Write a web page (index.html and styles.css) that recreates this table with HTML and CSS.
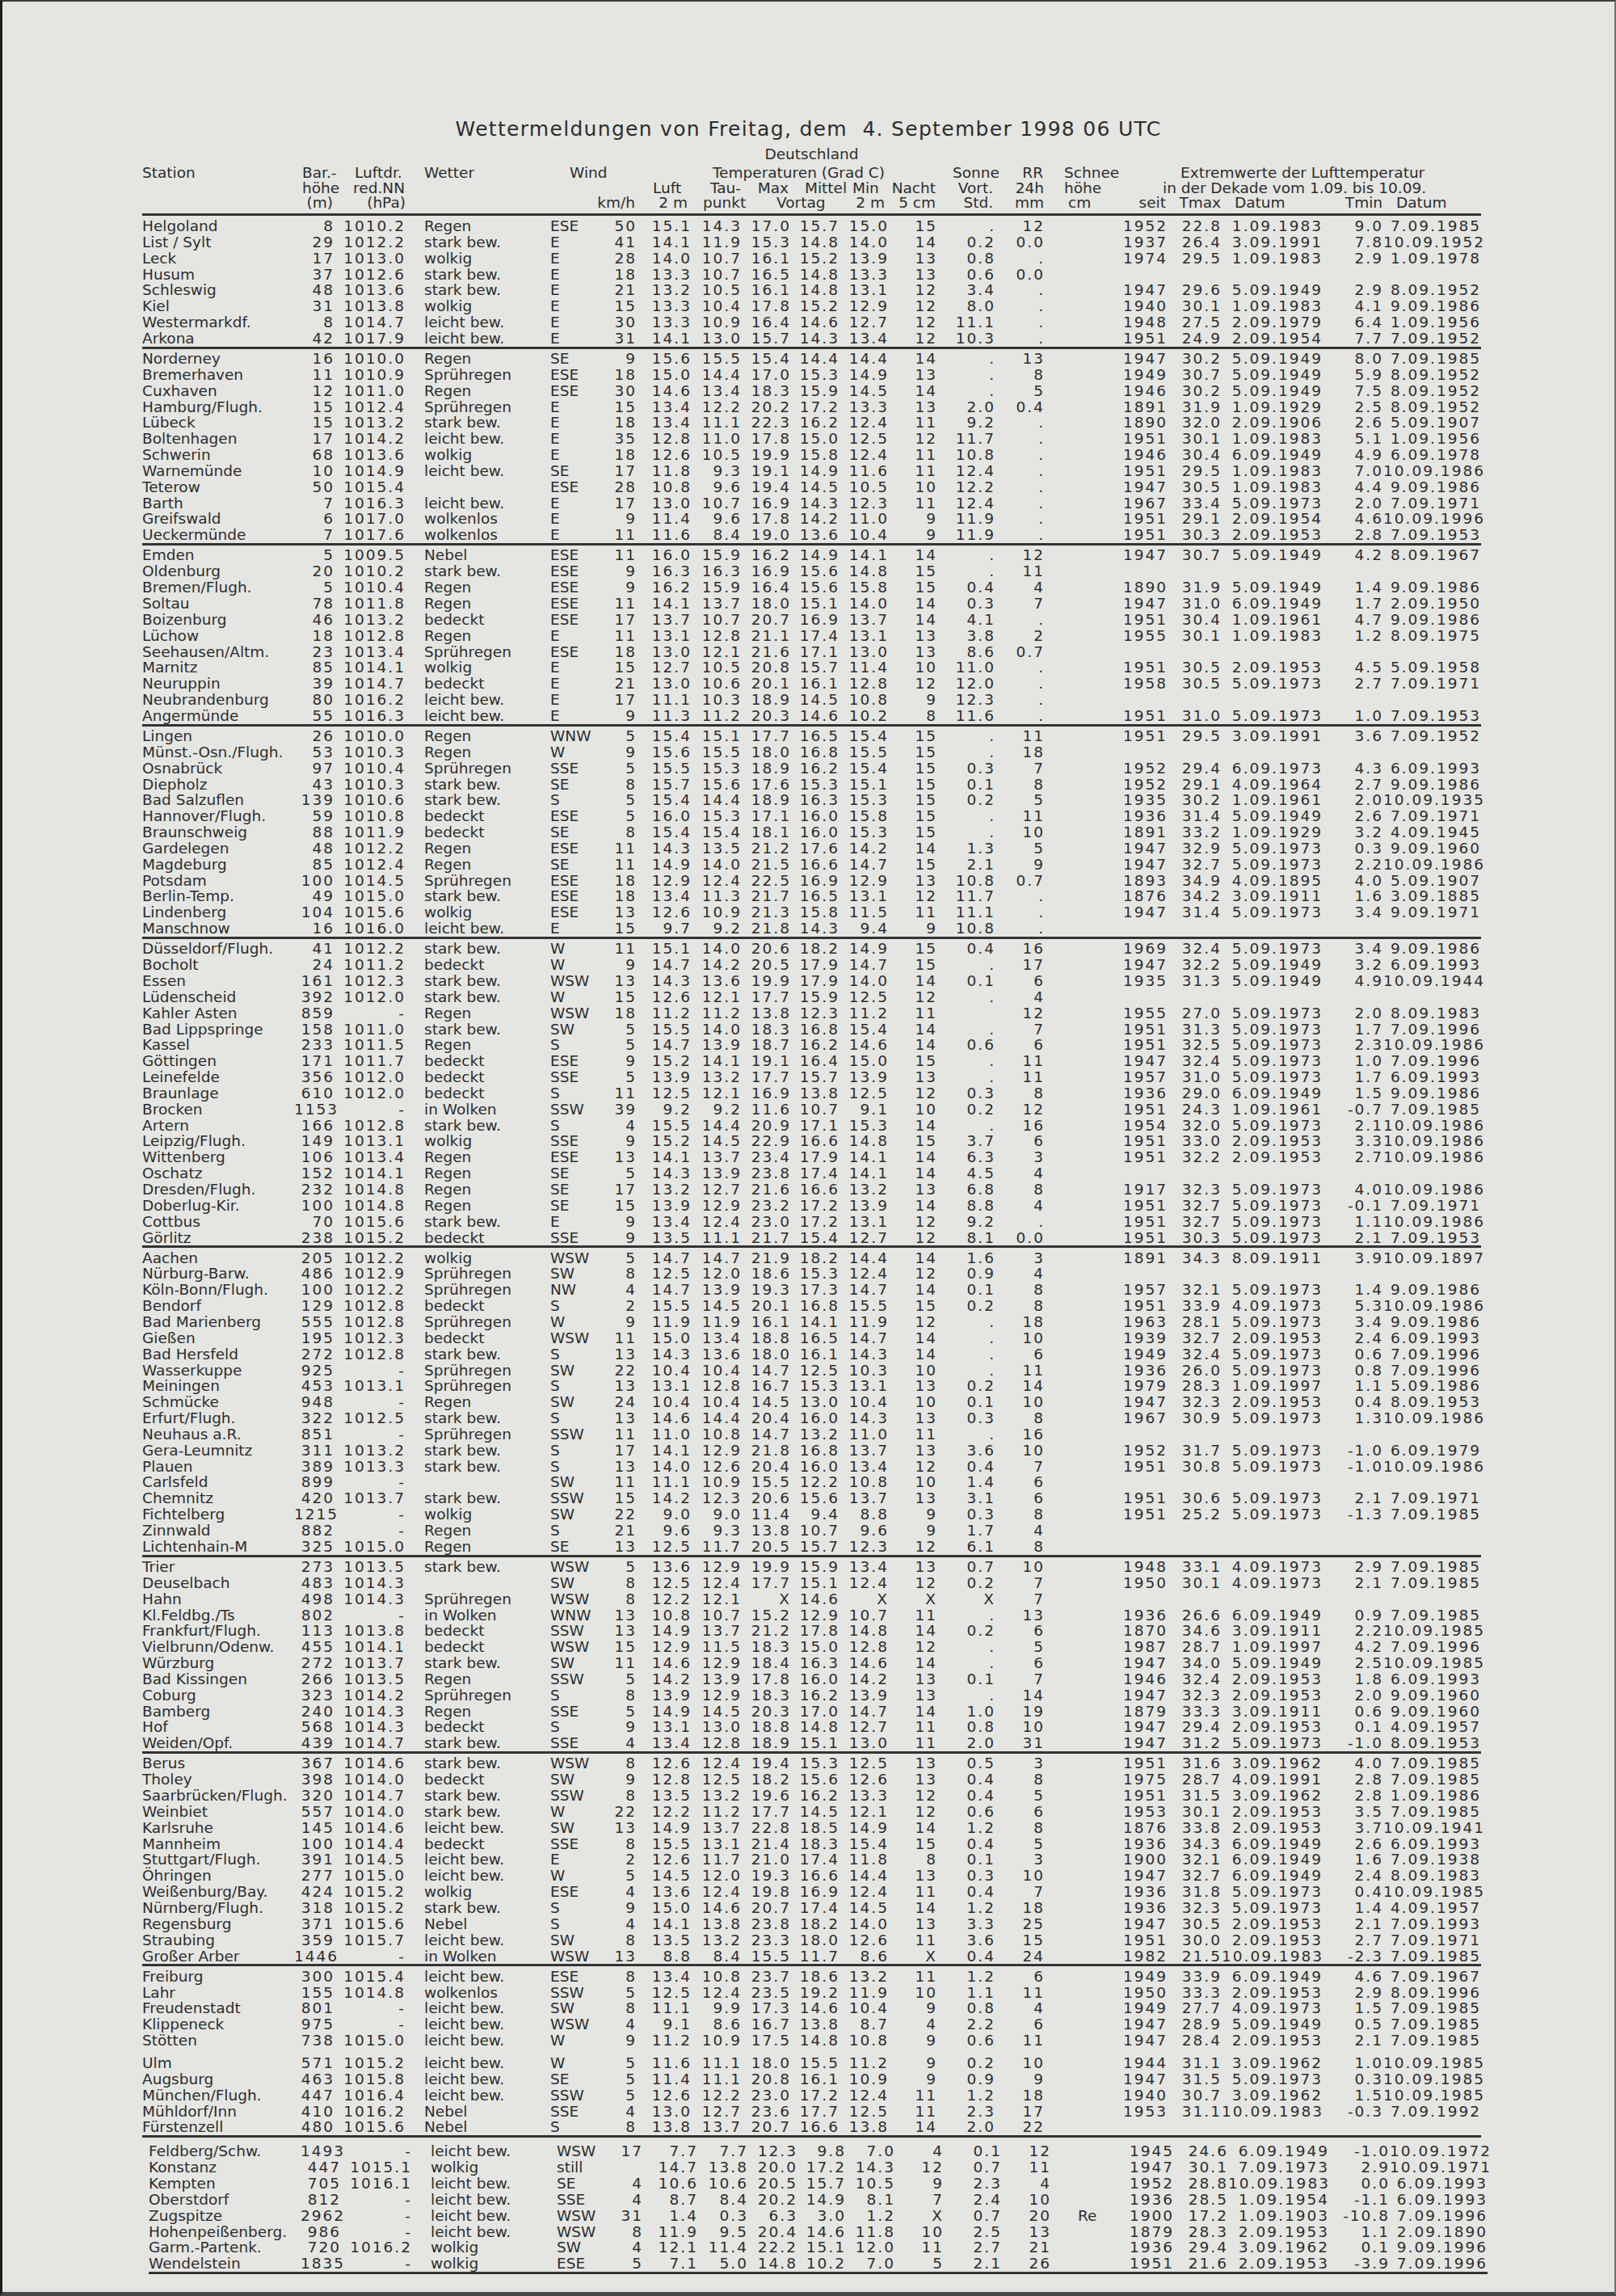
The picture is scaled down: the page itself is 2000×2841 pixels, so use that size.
FILE: index.html
```html
<!DOCTYPE html>
<html lang="de">
<head>
<meta charset="utf-8">
<title>Wettermeldungen 4. September 1998</title>
<link rel="stylesheet" href="styles.css">
</head>
<body>
<div class="page">
<h1 class="title">Wettermeldungen von Freitag, dem&nbsp; 4. September 1998 06 UTC</h1>
<div class="sheet">
<div class="land">Deutschland</div>
<table class="wx">
<colgroup><col><col><col><col><col><col><col><col><col><col><col><col><col><col><col><col><col><col><col><col></colgroup>
<thead>
<tr class="ha"><th>Station<th class="pl10">Bar.-<th class="pl25">Luftdr.<th class="pl23">Wetter<th colspan="2" class="pl24">Wind<th colspan="5" class="R pr5">Temperaturen (Grad C)<th><th class="pl19">Sonne<th class="R pr2">RR<th class="pl24">Schnee<th colspan="5" class="pl80">Extremwerte der Lufttemperatur</tr>
<tr class="hb"><th><th class="pl10">höhe<th class="R pr1">red.NN<th><th><th><th class="pl20">Luft<th class="R pr1">Tau-<th class="R pr3">Max<th class="pl17">Mittel<th class="pl16">Min<th class="R pr2">Nacht<th class="R pr3">Vort.<th class="R pr1">24h<th class="pl24">höhe<th colspan="5" class="pl58">in der Dekade vom 1.09. bis 10.09.</tr>
<tr class="hc"><th><th class="R pr2">(m)<th class="R pr0">(hPa)<th><th><th class="R pr2">km/h<th class="R pr5">2 m<th class="pl14">punkt<th colspan="2" class="pl43">Vortag<th class="R pr5">2 m<th class="R pr2">5 cm<th class="R pr3">Std.<th class="R pr1">mm<th class="pl29">cm<th class="R pr2">seit<th class="R pr1">Tmax<th class="pl16">Datum<th class="R pr1">Tmin<th class="pl16">Datum</tr>
</thead>
<tbody>
<tr><td>Helgoland<td>8<td>1010.2<td>Regen<td>ESE<td>50<td>15.1<td>14.3<td>17.0<td>15.7<td>15.0<td>15<td>.<td>12<td><td>1952<td>22.8<td>1.09.1983<td>9.0<td>7.09.1985</tr>
<tr><td>List / Sylt<td>29<td>1012.2<td>stark bew.<td>E<td>41<td>14.1<td>11.9<td>15.3<td>14.8<td>14.0<td>14<td>0.2<td>0.0<td><td>1937<td>26.4<td>3.09.1991<td>7.8<td>10.09.1952</tr>
<tr><td>Leck<td>17<td>1013.0<td>wolkig<td>E<td>28<td>14.0<td>10.7<td>16.1<td>15.2<td>13.9<td>13<td>0.8<td>.<td><td>1974<td>29.5<td>1.09.1983<td>2.9<td>1.09.1978</tr>
<tr><td>Husum<td>37<td>1012.6<td>stark bew.<td>E<td>18<td>13.3<td>10.7<td>16.5<td>14.8<td>13.3<td>13<td>0.6<td>0.0<td><td><td><td><td><td></tr>
<tr><td>Schleswig<td>48<td>1013.6<td>stark bew.<td>E<td>21<td>13.2<td>10.5<td>16.1<td>14.8<td>13.1<td>12<td>3.4<td>.<td><td>1947<td>29.6<td>5.09.1949<td>2.9<td>8.09.1952</tr>
<tr><td>Kiel<td>31<td>1013.8<td>wolkig<td>E<td>15<td>13.3<td>10.4<td>17.8<td>15.2<td>12.9<td>12<td>8.0<td>.<td><td>1940<td>30.1<td>1.09.1983<td>4.1<td>9.09.1986</tr>
<tr><td>Westermarkdf.<td>8<td>1014.7<td>leicht bew.<td>E<td>30<td>13.3<td>10.9<td>16.4<td>14.6<td>12.7<td>12<td>11.1<td>.<td><td>1948<td>27.5<td>2.09.1979<td>6.4<td>1.09.1956</tr>
<tr><td>Arkona<td>42<td>1017.9<td>leicht bew.<td>E<td>31<td>14.1<td>13.0<td>15.7<td>14.3<td>13.4<td>12<td>10.3<td>.<td><td>1951<td>24.9<td>2.09.1954<td>7.7<td>7.09.1952</tr>
</tbody>
<tbody>
<tr><td>Norderney<td>16<td>1010.0<td>Regen<td>SE<td>9<td>15.6<td>15.5<td>15.4<td>14.4<td>14.4<td>14<td>.<td>13<td><td>1947<td>30.2<td>5.09.1949<td>8.0<td>7.09.1985</tr>
<tr><td>Bremerhaven<td>11<td>1010.9<td>Sprühregen<td>ESE<td>18<td>15.0<td>14.4<td>17.0<td>15.3<td>14.9<td>13<td>.<td>8<td><td>1949<td>30.7<td>5.09.1949<td>5.9<td>8.09.1952</tr>
<tr><td>Cuxhaven<td>12<td>1011.0<td>Regen<td>ESE<td>30<td>14.6<td>13.4<td>18.3<td>15.9<td>14.5<td>14<td>.<td>5<td><td>1946<td>30.2<td>5.09.1949<td>7.5<td>8.09.1952</tr>
<tr><td>Hamburg/Flugh.<td>15<td>1012.4<td>Sprühregen<td>E<td>15<td>13.4<td>12.2<td>20.2<td>17.2<td>13.3<td>13<td>2.0<td>0.4<td><td>1891<td>31.9<td>1.09.1929<td>2.5<td>8.09.1952</tr>
<tr><td>Lübeck<td>15<td>1013.2<td>stark bew.<td>E<td>18<td>13.4<td>11.1<td>22.3<td>16.2<td>12.4<td>11<td>9.2<td>.<td><td>1890<td>32.0<td>2.09.1906<td>2.6<td>5.09.1907</tr>
<tr><td>Boltenhagen<td>17<td>1014.2<td>leicht bew.<td>E<td>35<td>12.8<td>11.0<td>17.8<td>15.0<td>12.5<td>12<td>11.7<td>.<td><td>1951<td>30.1<td>1.09.1983<td>5.1<td>1.09.1956</tr>
<tr><td>Schwerin<td>68<td>1013.6<td>wolkig<td>E<td>18<td>12.6<td>10.5<td>19.9<td>15.8<td>12.4<td>11<td>10.8<td>.<td><td>1946<td>30.4<td>6.09.1949<td>4.9<td>6.09.1978</tr>
<tr><td>Warnemünde<td>10<td>1014.9<td>leicht bew.<td>SE<td>17<td>11.8<td>9.3<td>19.1<td>14.9<td>11.6<td>11<td>12.4<td>.<td><td>1951<td>29.5<td>1.09.1983<td>7.0<td>10.09.1986</tr>
<tr><td>Teterow<td>50<td>1015.4<td><td>ESE<td>28<td>10.8<td>9.6<td>19.4<td>14.5<td>10.5<td>10<td>12.2<td>.<td><td>1947<td>30.5<td>1.09.1983<td>4.4<td>9.09.1986</tr>
<tr><td>Barth<td>7<td>1016.3<td>leicht bew.<td>E<td>17<td>13.0<td>10.7<td>16.9<td>14.3<td>12.3<td>11<td>12.4<td>.<td><td>1967<td>33.4<td>5.09.1973<td>2.0<td>7.09.1971</tr>
<tr><td>Greifswald<td>6<td>1017.0<td>wolkenlos<td>E<td>9<td>11.4<td>9.6<td>17.8<td>14.2<td>11.0<td>9<td>11.9<td>.<td><td>1951<td>29.1<td>2.09.1954<td>4.6<td>10.09.1996</tr>
<tr><td>Ueckermünde<td>7<td>1017.6<td>wolkenlos<td>E<td>11<td>11.6<td>8.4<td>19.0<td>13.6<td>10.4<td>9<td>11.9<td>.<td><td>1951<td>30.3<td>2.09.1953<td>2.8<td>7.09.1953</tr>
</tbody>
<tbody>
<tr><td>Emden<td>5<td>1009.5<td>Nebel<td>ESE<td>11<td>16.0<td>15.9<td>16.2<td>14.9<td>14.1<td>14<td>.<td>12<td><td>1947<td>30.7<td>5.09.1949<td>4.2<td>8.09.1967</tr>
<tr><td>Oldenburg<td>20<td>1010.2<td>stark bew.<td>ESE<td>9<td>16.3<td>16.3<td>16.9<td>15.6<td>14.8<td>15<td>.<td>11<td><td><td><td><td><td></tr>
<tr><td>Bremen/Flugh.<td>5<td>1010.4<td>Regen<td>ESE<td>9<td>16.2<td>15.9<td>16.4<td>15.6<td>15.8<td>15<td>0.4<td>4<td><td>1890<td>31.9<td>5.09.1949<td>1.4<td>9.09.1986</tr>
<tr><td>Soltau<td>78<td>1011.8<td>Regen<td>ESE<td>11<td>14.1<td>13.7<td>18.0<td>15.1<td>14.0<td>14<td>0.3<td>7<td><td>1947<td>31.0<td>6.09.1949<td>1.7<td>2.09.1950</tr>
<tr><td>Boizenburg<td>46<td>1013.2<td>bedeckt<td>ESE<td>17<td>13.7<td>10.7<td>20.7<td>16.9<td>13.7<td>14<td>4.1<td>.<td><td>1951<td>30.4<td>1.09.1961<td>4.7<td>9.09.1986</tr>
<tr><td>Lüchow<td>18<td>1012.8<td>Regen<td>E<td>11<td>13.1<td>12.8<td>21.1<td>17.4<td>13.1<td>13<td>3.8<td>2<td><td>1955<td>30.1<td>1.09.1983<td>1.2<td>8.09.1975</tr>
<tr><td>Seehausen/Altm.<td>23<td>1013.4<td>Sprühregen<td>ESE<td>18<td>13.0<td>12.1<td>21.6<td>17.1<td>13.0<td>13<td>8.6<td>0.7<td><td><td><td><td><td></tr>
<tr><td>Marnitz<td>85<td>1014.1<td>wolkig<td>E<td>15<td>12.7<td>10.5<td>20.8<td>15.7<td>11.4<td>10<td>11.0<td>.<td><td>1951<td>30.5<td>2.09.1953<td>4.5<td>5.09.1958</tr>
<tr><td>Neuruppin<td>39<td>1014.7<td>bedeckt<td>E<td>21<td>13.0<td>10.6<td>20.1<td>16.1<td>12.8<td>12<td>12.0<td>.<td><td>1958<td>30.5<td>5.09.1973<td>2.7<td>7.09.1971</tr>
<tr><td>Neubrandenburg<td>80<td>1016.2<td>leicht bew.<td>E<td>17<td>11.1<td>10.3<td>18.9<td>14.5<td>10.8<td>9<td>12.3<td>.<td><td><td><td><td><td></tr>
<tr><td>Angermünde<td>55<td>1016.3<td>leicht bew.<td>E<td>9<td>11.3<td>11.2<td>20.3<td>14.6<td>10.2<td>8<td>11.6<td>.<td><td>1951<td>31.0<td>5.09.1973<td>1.0<td>7.09.1953</tr>
</tbody>
<tbody>
<tr><td>Lingen<td>26<td>1010.0<td>Regen<td>WNW<td>5<td>15.4<td>15.1<td>17.7<td>16.5<td>15.4<td>15<td>.<td>11<td><td>1951<td>29.5<td>3.09.1991<td>3.6<td>7.09.1952</tr>
<tr><td>Münst.-Osn./Flugh.<td>53<td>1010.3<td>Regen<td>W<td>9<td>15.6<td>15.5<td>18.0<td>16.8<td>15.5<td>15<td>.<td>18<td><td><td><td><td><td></tr>
<tr><td>Osnabrück<td>97<td>1010.4<td>Sprühregen<td>SSE<td>5<td>15.5<td>15.3<td>18.9<td>16.2<td>15.4<td>15<td>0.3<td>7<td><td>1952<td>29.4<td>6.09.1973<td>4.3<td>6.09.1993</tr>
<tr><td>Diepholz<td>43<td>1010.3<td>stark bew.<td>SE<td>8<td>15.7<td>15.6<td>17.6<td>15.3<td>15.1<td>15<td>0.1<td>8<td><td>1952<td>29.1<td>4.09.1964<td>2.7<td>9.09.1986</tr>
<tr><td>Bad Salzuflen<td>139<td>1010.6<td>stark bew.<td>S<td>5<td>15.4<td>14.4<td>18.9<td>16.3<td>15.3<td>15<td>0.2<td>5<td><td>1935<td>30.2<td>1.09.1961<td>2.0<td>10.09.1935</tr>
<tr><td>Hannover/Flugh.<td>59<td>1010.8<td>bedeckt<td>ESE<td>5<td>16.0<td>15.3<td>17.1<td>16.0<td>15.8<td>15<td>.<td>11<td><td>1936<td>31.4<td>5.09.1949<td>2.6<td>7.09.1971</tr>
<tr><td>Braunschweig<td>88<td>1011.9<td>bedeckt<td>SE<td>8<td>15.4<td>15.4<td>18.1<td>16.0<td>15.3<td>15<td>.<td>10<td><td>1891<td>33.2<td>1.09.1929<td>3.2<td>4.09.1945</tr>
<tr><td>Gardelegen<td>48<td>1012.2<td>Regen<td>ESE<td>11<td>14.3<td>13.5<td>21.2<td>17.6<td>14.2<td>14<td>1.3<td>5<td><td>1947<td>32.9<td>5.09.1973<td>0.3<td>9.09.1960</tr>
<tr><td>Magdeburg<td>85<td>1012.4<td>Regen<td>SE<td>11<td>14.9<td>14.0<td>21.5<td>16.6<td>14.7<td>15<td>2.1<td>9<td><td>1947<td>32.7<td>5.09.1973<td>2.2<td>10.09.1986</tr>
<tr><td>Potsdam<td>100<td>1014.5<td>Sprühregen<td>ESE<td>18<td>12.9<td>12.4<td>22.5<td>16.9<td>12.9<td>13<td>10.8<td>0.7<td><td>1893<td>34.9<td>4.09.1895<td>4.0<td>5.09.1907</tr>
<tr><td>Berlin-Temp.<td>49<td>1015.0<td>stark bew.<td>ESE<td>18<td>13.4<td>11.3<td>21.7<td>16.5<td>13.1<td>12<td>11.7<td>.<td><td>1876<td>34.2<td>3.09.1911<td>1.6<td>3.09.1885</tr>
<tr><td>Lindenberg<td>104<td>1015.6<td>wolkig<td>ESE<td>13<td>12.6<td>10.9<td>21.3<td>15.8<td>11.5<td>11<td>11.1<td>.<td><td>1947<td>31.4<td>5.09.1973<td>3.4<td>9.09.1971</tr>
<tr><td>Manschnow<td>16<td>1016.0<td>leicht bew.<td>E<td>15<td>9.7<td>9.2<td>21.8<td>14.3<td>9.4<td>9<td>10.8<td>.<td><td><td><td><td><td></tr>
</tbody>
<tbody>
<tr><td>Düsseldorf/Flugh.<td>41<td>1012.2<td>stark bew.<td>W<td>11<td>15.1<td>14.0<td>20.6<td>18.2<td>14.9<td>15<td>0.4<td>16<td><td>1969<td>32.4<td>5.09.1973<td>3.4<td>9.09.1986</tr>
<tr><td>Bocholt<td>24<td>1011.2<td>bedeckt<td>W<td>9<td>14.7<td>14.2<td>20.5<td>17.9<td>14.7<td>15<td>.<td>17<td><td>1947<td>32.2<td>5.09.1949<td>3.2<td>6.09.1993</tr>
<tr><td>Essen<td>161<td>1012.3<td>stark bew.<td>WSW<td>13<td>14.3<td>13.6<td>19.9<td>17.9<td>14.0<td>14<td>0.1<td>6<td><td>1935<td>31.3<td>5.09.1949<td>4.9<td>10.09.1944</tr>
<tr><td>Lüdenscheid<td>392<td>1012.0<td>stark bew.<td>W<td>15<td>12.6<td>12.1<td>17.7<td>15.9<td>12.5<td>12<td>.<td>4<td><td><td><td><td><td></tr>
<tr><td>Kahler Asten<td>859<td>-<td>Regen<td>WSW<td>18<td>11.2<td>11.2<td>13.8<td>12.3<td>11.2<td>11<td><td>12<td><td>1955<td>27.0<td>5.09.1973<td>2.0<td>8.09.1983</tr>
<tr><td>Bad Lippspringe<td>158<td>1011.0<td>stark bew.<td>SW<td>5<td>15.5<td>14.0<td>18.3<td>16.8<td>15.4<td>14<td>.<td>7<td><td>1951<td>31.3<td>5.09.1973<td>1.7<td>7.09.1996</tr>
<tr><td>Kassel<td>233<td>1011.5<td>Regen<td>S<td>5<td>14.7<td>13.9<td>18.7<td>16.2<td>14.6<td>14<td>0.6<td>6<td><td>1951<td>32.5<td>5.09.1973<td>2.3<td>10.09.1986</tr>
<tr><td>Göttingen<td>171<td>1011.7<td>bedeckt<td>ESE<td>9<td>15.2<td>14.1<td>19.1<td>16.4<td>15.0<td>15<td>.<td>11<td><td>1947<td>32.4<td>5.09.1973<td>1.0<td>7.09.1996</tr>
<tr><td>Leinefelde<td>356<td>1012.0<td>bedeckt<td>SSE<td>5<td>13.9<td>13.2<td>17.7<td>15.7<td>13.9<td>13<td>.<td>11<td><td>1957<td>31.0<td>5.09.1973<td>1.7<td>6.09.1993</tr>
<tr><td>Braunlage<td>610<td>1012.0<td>bedeckt<td>S<td>11<td>12.5<td>12.1<td>16.9<td>13.8<td>12.5<td>12<td>0.3<td>8<td><td>1936<td>29.0<td>6.09.1949<td>1.5<td>9.09.1986</tr>
<tr><td>Brocken<td>1153<td>-<td>in Wolken<td>SSW<td>39<td>9.2<td>9.2<td>11.6<td>10.7<td>9.1<td>10<td>0.2<td>12<td><td>1951<td>24.3<td>1.09.1961<td>-0.7<td>7.09.1985</tr>
<tr><td>Artern<td>166<td>1012.8<td>stark bew.<td>S<td>4<td>15.5<td>14.4<td>20.9<td>17.1<td>15.3<td>14<td>.<td>16<td><td>1954<td>32.0<td>5.09.1973<td>2.1<td>10.09.1986</tr>
<tr><td>Leipzig/Flugh.<td>149<td>1013.1<td>wolkig<td>SSE<td>9<td>15.2<td>14.5<td>22.9<td>16.6<td>14.8<td>15<td>3.7<td>6<td><td>1951<td>33.0<td>2.09.1953<td>3.3<td>10.09.1986</tr>
<tr><td>Wittenberg<td>106<td>1013.4<td>Regen<td>ESE<td>13<td>14.1<td>13.7<td>23.4<td>17.9<td>14.1<td>14<td>6.3<td>3<td><td>1951<td>32.2<td>2.09.1953<td>2.7<td>10.09.1986</tr>
<tr><td>Oschatz<td>152<td>1014.1<td>Regen<td>SE<td>5<td>14.3<td>13.9<td>23.8<td>17.4<td>14.1<td>14<td>4.5<td>4<td><td><td><td><td><td></tr>
<tr><td>Dresden/Flugh.<td>232<td>1014.8<td>Regen<td>SE<td>17<td>13.2<td>12.7<td>21.6<td>16.6<td>13.2<td>13<td>6.8<td>8<td><td>1917<td>32.3<td>5.09.1973<td>4.0<td>10.09.1986</tr>
<tr><td>Doberlug-Kir.<td>100<td>1014.8<td>Regen<td>SE<td>15<td>13.9<td>12.9<td>23.2<td>17.2<td>13.9<td>14<td>8.8<td>4<td><td>1951<td>32.7<td>5.09.1973<td>-0.1<td>7.09.1971</tr>
<tr><td>Cottbus<td>70<td>1015.6<td>stark bew.<td>E<td>9<td>13.4<td>12.4<td>23.0<td>17.2<td>13.1<td>12<td>9.2<td>.<td><td>1951<td>32.7<td>5.09.1973<td>1.1<td>10.09.1986</tr>
<tr><td>Görlitz<td>238<td>1015.2<td>bedeckt<td>SSE<td>9<td>13.5<td>11.1<td>21.7<td>15.4<td>12.7<td>12<td>8.1<td>0.0<td><td>1951<td>30.3<td>5.09.1973<td>2.1<td>7.09.1953</tr>
</tbody>
<tbody class="lo">
<tr><td>Aachen<td>205<td>1012.2<td>wolkig<td>WSW<td>5<td>14.7<td>14.7<td>21.9<td>18.2<td>14.4<td>14<td>1.6<td>3<td><td>1891<td>34.3<td>8.09.1911<td>3.9<td>10.09.1897</tr>
<tr><td>Nürburg-Barw.<td>486<td>1012.9<td>Sprühregen<td>SW<td>8<td>12.5<td>12.0<td>18.6<td>15.3<td>12.4<td>12<td>0.9<td>4<td><td><td><td><td><td></tr>
<tr><td>Köln-Bonn/Flugh.<td>100<td>1012.2<td>Sprühregen<td>NW<td>4<td>14.7<td>13.9<td>19.3<td>17.3<td>14.7<td>14<td>0.1<td>8<td><td>1957<td>32.1<td>5.09.1973<td>1.4<td>9.09.1986</tr>
<tr><td>Bendorf<td>129<td>1012.8<td>bedeckt<td>S<td>2<td>15.5<td>14.5<td>20.1<td>16.8<td>15.5<td>15<td>0.2<td>8<td><td>1951<td>33.9<td>4.09.1973<td>5.3<td>10.09.1986</tr>
<tr><td>Bad Marienberg<td>555<td>1012.8<td>Sprühregen<td>W<td>9<td>11.9<td>11.9<td>16.1<td>14.1<td>11.9<td>12<td>.<td>18<td><td>1963<td>28.1<td>5.09.1973<td>3.4<td>9.09.1986</tr>
<tr><td>Gießen<td>195<td>1012.3<td>bedeckt<td>WSW<td>11<td>15.0<td>13.4<td>18.8<td>16.5<td>14.7<td>14<td>.<td>10<td><td>1939<td>32.7<td>2.09.1953<td>2.4<td>6.09.1993</tr>
<tr><td>Bad Hersfeld<td>272<td>1012.8<td>stark bew.<td>S<td>13<td>14.3<td>13.6<td>18.0<td>16.1<td>14.3<td>14<td>.<td>6<td><td>1949<td>32.4<td>5.09.1973<td>0.6<td>7.09.1996</tr>
<tr><td>Wasserkuppe<td>925<td>-<td>Sprühregen<td>SW<td>22<td>10.4<td>10.4<td>14.7<td>12.5<td>10.3<td>10<td>.<td>11<td><td>1936<td>26.0<td>5.09.1973<td>0.8<td>7.09.1996</tr>
<tr><td>Meiningen<td>453<td>1013.1<td>Sprühregen<td>S<td>13<td>13.1<td>12.8<td>16.7<td>15.3<td>13.1<td>13<td>0.2<td>14<td><td>1979<td>28.3<td>1.09.1997<td>1.1<td>5.09.1986</tr>
<tr><td>Schmücke<td>948<td>-<td>Regen<td>SW<td>24<td>10.4<td>10.4<td>14.5<td>13.0<td>10.4<td>10<td>0.1<td>10<td><td>1947<td>32.3<td>2.09.1953<td>0.4<td>8.09.1953</tr>
<tr><td>Erfurt/Flugh.<td>322<td>1012.5<td>stark bew.<td>S<td>13<td>14.6<td>14.4<td>20.4<td>16.0<td>14.3<td>13<td>0.3<td>8<td><td>1967<td>30.9<td>5.09.1973<td>1.3<td>10.09.1986</tr>
<tr><td>Neuhaus a.R.<td>851<td>-<td>Sprühregen<td>SSW<td>11<td>11.0<td>10.8<td>14.7<td>13.2<td>11.0<td>11<td>.<td>16<td><td><td><td><td><td></tr>
<tr><td>Gera-Leumnitz<td>311<td>1013.2<td>stark bew.<td>S<td>17<td>14.1<td>12.9<td>21.8<td>16.8<td>13.7<td>13<td>3.6<td>10<td><td>1952<td>31.7<td>5.09.1973<td>-1.0<td>6.09.1979</tr>
<tr><td>Plauen<td>389<td>1013.3<td>stark bew.<td>S<td>13<td>14.0<td>12.6<td>20.4<td>16.0<td>13.4<td>12<td>0.4<td>7<td><td>1951<td>30.8<td>5.09.1973<td>-1.0<td>10.09.1986</tr>
<tr><td>Carlsfeld<td>899<td>-<td><td>SW<td>11<td>11.1<td>10.9<td>15.5<td>12.2<td>10.8<td>10<td>1.4<td>6<td><td><td><td><td><td></tr>
<tr><td>Chemnitz<td>420<td>1013.7<td>stark bew.<td>SSW<td>15<td>14.2<td>12.3<td>20.6<td>15.6<td>13.7<td>13<td>3.1<td>6<td><td>1951<td>30.6<td>5.09.1973<td>2.1<td>7.09.1971</tr>
<tr><td>Fichtelberg<td>1215<td>-<td>wolkig<td>SW<td>22<td>9.0<td>9.0<td>11.4<td>9.4<td>8.8<td>9<td>0.3<td>8<td><td>1951<td>25.2<td>5.09.1973<td>-1.3<td>7.09.1985</tr>
<tr><td>Zinnwald<td>882<td>-<td>Regen<td>S<td>21<td>9.6<td>9.3<td>13.8<td>10.7<td>9.6<td>9<td>1.7<td>4<td><td><td><td><td><td></tr>
<tr><td>Lichtenhain-M<td>325<td>1015.0<td>Regen<td>SE<td>13<td>12.5<td>11.7<td>20.5<td>15.7<td>12.3<td>12<td>6.1<td>8<td><td><td><td><td><td></tr>
</tbody>
<tbody class="lo">
<tr><td>Trier<td>273<td>1013.5<td>stark bew.<td>WSW<td>5<td>13.6<td>12.9<td>19.9<td>15.9<td>13.4<td>13<td>0.7<td>10<td><td>1948<td>33.1<td>4.09.1973<td>2.9<td>7.09.1985</tr>
<tr><td>Deuselbach<td>483<td>1014.3<td><td>SW<td>8<td>12.5<td>12.4<td>17.7<td>15.1<td>12.4<td>12<td>0.2<td>7<td><td>1950<td>30.1<td>4.09.1973<td>2.1<td>7.09.1985</tr>
<tr><td>Hahn<td>498<td>1014.3<td>Sprühregen<td>WSW<td>8<td>12.2<td>12.1<td>X<td>14.6<td>X<td>X<td>X<td>7<td><td><td><td><td><td></tr>
<tr><td>Kl.Feldbg./Ts<td>802<td>-<td>in Wolken<td>WNW<td>13<td>10.8<td>10.7<td>15.2<td>12.9<td>10.7<td>11<td>.<td>13<td><td>1936<td>26.6<td>6.09.1949<td>0.9<td>7.09.1985</tr>
<tr><td>Frankfurt/Flugh.<td>113<td>1013.8<td>bedeckt<td>SSW<td>13<td>14.9<td>13.7<td>21.2<td>17.8<td>14.8<td>14<td>0.2<td>6<td><td>1870<td>34.6<td>3.09.1911<td>2.2<td>10.09.1985</tr>
<tr><td>Vielbrunn/Odenw.<td>455<td>1014.1<td>bedeckt<td>WSW<td>15<td>12.9<td>11.5<td>18.3<td>15.0<td>12.8<td>12<td>.<td>5<td><td>1987<td>28.7<td>1.09.1997<td>4.2<td>7.09.1996</tr>
<tr><td>Würzburg<td>272<td>1013.7<td>stark bew.<td>SW<td>11<td>14.6<td>12.9<td>18.4<td>16.3<td>14.6<td>14<td>.<td>6<td><td>1947<td>34.0<td>5.09.1949<td>2.5<td>10.09.1985</tr>
<tr><td>Bad Kissingen<td>266<td>1013.5<td>Regen<td>SSW<td>5<td>14.2<td>13.9<td>17.8<td>16.0<td>14.2<td>13<td>0.1<td>7<td><td>1946<td>32.4<td>2.09.1953<td>1.8<td>6.09.1993</tr>
<tr><td>Coburg<td>323<td>1014.2<td>Sprühregen<td>S<td>8<td>13.9<td>12.9<td>18.3<td>16.2<td>13.9<td>13<td>.<td>14<td><td>1947<td>32.3<td>2.09.1953<td>2.0<td>9.09.1960</tr>
<tr><td>Bamberg<td>240<td>1014.3<td>Regen<td>SSE<td>5<td>14.9<td>14.5<td>20.3<td>17.0<td>14.7<td>14<td>1.0<td>19<td><td>1879<td>33.3<td>3.09.1911<td>0.6<td>9.09.1960</tr>
<tr><td>Hof<td>568<td>1014.3<td>bedeckt<td>S<td>9<td>13.1<td>13.0<td>18.8<td>14.8<td>12.7<td>11<td>0.8<td>10<td><td>1947<td>29.4<td>2.09.1953<td>0.1<td>4.09.1957</tr>
<tr><td>Weiden/Opf.<td>439<td>1014.7<td>stark bew.<td>SSE<td>4<td>13.4<td>12.8<td>18.9<td>15.1<td>13.0<td>11<td>2.0<td>31<td><td>1947<td>31.2<td>5.09.1973<td>-1.0<td>8.09.1953</tr>
</tbody>
<tbody class="lo">
<tr><td>Berus<td>367<td>1014.6<td>stark bew.<td>WSW<td>8<td>12.6<td>12.4<td>19.4<td>15.3<td>12.5<td>13<td>0.5<td>3<td><td>1951<td>31.6<td>3.09.1962<td>4.0<td>7.09.1985</tr>
<tr><td>Tholey<td>398<td>1014.0<td>bedeckt<td>SW<td>9<td>12.8<td>12.5<td>18.2<td>15.6<td>12.6<td>13<td>0.4<td>8<td><td>1975<td>28.7<td>4.09.1991<td>2.8<td>7.09.1985</tr>
<tr><td>Saarbrücken/Flugh.<td>320<td>1014.7<td>stark bew.<td>SSW<td>8<td>13.5<td>13.2<td>19.6<td>16.2<td>13.3<td>12<td>0.4<td>5<td><td>1951<td>31.5<td>3.09.1962<td>2.8<td>1.09.1986</tr>
<tr><td>Weinbiet<td>557<td>1014.0<td>stark bew.<td>W<td>22<td>12.2<td>11.2<td>17.7<td>14.5<td>12.1<td>12<td>0.6<td>6<td><td>1953<td>30.1<td>2.09.1953<td>3.5<td>7.09.1985</tr>
<tr><td>Karlsruhe<td>145<td>1014.6<td>leicht bew.<td>SW<td>13<td>14.9<td>13.7<td>22.8<td>18.5<td>14.9<td>14<td>1.2<td>8<td><td>1876<td>33.8<td>2.09.1953<td>3.7<td>10.09.1941</tr>
<tr><td>Mannheim<td>100<td>1014.4<td>bedeckt<td>SSE<td>8<td>15.5<td>13.1<td>21.4<td>18.3<td>15.4<td>15<td>0.4<td>5<td><td>1936<td>34.3<td>6.09.1949<td>2.6<td>6.09.1993</tr>
<tr><td>Stuttgart/Flugh.<td>391<td>1014.5<td>leicht bew.<td>E<td>2<td>12.6<td>11.7<td>21.0<td>17.4<td>11.8<td>8<td>0.1<td>3<td><td>1900<td>32.1<td>6.09.1949<td>1.6<td>7.09.1938</tr>
<tr><td>Öhringen<td>277<td>1015.0<td>leicht bew.<td>W<td>5<td>14.5<td>12.0<td>19.3<td>16.6<td>14.4<td>13<td>0.3<td>10<td><td>1947<td>32.7<td>6.09.1949<td>2.4<td>8.09.1983</tr>
<tr><td>Weißenburg/Bay.<td>424<td>1015.2<td>wolkig<td>ESE<td>4<td>13.6<td>12.4<td>19.8<td>16.9<td>12.4<td>11<td>0.4<td>7<td><td>1936<td>31.8<td>5.09.1973<td>0.4<td>10.09.1985</tr>
<tr><td>Nürnberg/Flugh.<td>318<td>1015.2<td>stark bew.<td>S<td>9<td>15.0<td>14.6<td>20.7<td>17.4<td>14.5<td>14<td>1.2<td>18<td><td>1936<td>32.3<td>5.09.1973<td>1.4<td>4.09.1957</tr>
<tr><td>Regensburg<td>371<td>1015.6<td>Nebel<td>S<td>4<td>14.1<td>13.8<td>23.8<td>18.2<td>14.0<td>13<td>3.3<td>25<td><td>1947<td>30.5<td>2.09.1953<td>2.1<td>7.09.1993</tr>
<tr><td>Straubing<td>359<td>1015.7<td>leicht bew.<td>SW<td>8<td>13.5<td>13.2<td>23.3<td>18.0<td>12.6<td>11<td>3.6<td>15<td><td>1951<td>30.0<td>2.09.1953<td>2.7<td>7.09.1971</tr>
<tr><td>Großer Arber<td>1446<td>-<td>in Wolken<td>WSW<td>13<td>8.8<td>8.4<td>15.5<td>11.7<td>8.6<td>X<td>0.4<td>24<td><td>1982<td>21.5<td>10.09.1983<td>-2.3<td>7.09.1985</tr>
</tbody>
<tbody class="lo">
<tr><td>Freiburg<td>300<td>1015.4<td>leicht bew.<td>ESE<td>8<td>13.4<td>10.8<td>23.7<td>18.6<td>13.2<td>11<td>1.2<td>6<td><td>1949<td>33.9<td>6.09.1949<td>4.6<td>7.09.1967</tr>
<tr><td>Lahr<td>155<td>1014.8<td>wolkenlos<td>SSW<td>5<td>12.5<td>12.4<td>23.5<td>19.2<td>11.9<td>10<td>1.1<td>11<td><td>1950<td>33.3<td>2.09.1953<td>2.9<td>8.09.1996</tr>
<tr><td>Freudenstadt<td>801<td>-<td>leicht bew.<td>SW<td>8<td>11.1<td>9.9<td>17.3<td>14.6<td>10.4<td>9<td>0.8<td>4<td><td>1949<td>27.7<td>4.09.1973<td>1.5<td>7.09.1985</tr>
<tr><td>Klippeneck<td>975<td>-<td>leicht bew.<td>WSW<td>4<td>9.1<td>8.6<td>16.7<td>13.8<td>8.7<td>4<td>2.2<td>6<td><td>1947<td>28.9<td>5.09.1949<td>0.5<td>7.09.1985</tr>
<tr><td>Stötten<td>738<td>1015.0<td>leicht bew.<td>W<td>9<td>11.2<td>10.9<td>17.5<td>14.8<td>10.8<td>9<td>0.6<td>11<td><td>1947<td>28.4<td>2.09.1953<td>2.1<td>7.09.1985</tr>
<tr class="gap"><td>Ulm<td>571<td>1015.2<td>leicht bew.<td>W<td>5<td>11.6<td>11.1<td>18.0<td>15.5<td>11.2<td>9<td>0.2<td>10<td><td>1944<td>31.1<td>3.09.1962<td>1.0<td>10.09.1985</tr>
<tr><td>Augsburg<td>463<td>1015.8<td>leicht bew.<td>SE<td>5<td>11.4<td>11.1<td>20.8<td>16.1<td>10.9<td>9<td>0.9<td>9<td><td>1947<td>31.5<td>5.09.1973<td>0.3<td>10.09.1985</tr>
<tr><td>München/Flugh.<td>447<td>1016.4<td>leicht bew.<td>SSW<td>5<td>12.6<td>12.2<td>23.0<td>17.2<td>12.4<td>11<td>1.2<td>18<td><td>1940<td>30.7<td>3.09.1962<td>1.5<td>10.09.1985</tr>
<tr><td>Mühldorf/Inn<td>410<td>1016.2<td>Nebel<td>SSE<td>4<td>13.0<td>12.7<td>23.6<td>17.7<td>12.5<td>11<td>2.3<td>17<td><td>1953<td>31.1<td>10.09.1983<td>-0.3<td>7.09.1992</tr>
<tr><td>Fürstenzell<td>480<td>1015.6<td>Nebel<td>S<td>8<td>13.8<td>13.7<td>20.7<td>16.6<td>13.8<td>14<td>2.0<td>22<td><td><td><td><td><td></tr>
</tbody>
</table>
<table class="wx alpine">
<colgroup><col><col><col><col><col><col><col><col><col><col><col><col><col><col><col><col><col><col><col><col></colgroup>
<tbody class="lo">
<tr><td>Feldberg/Schw.<td>1493<td>-<td>leicht bew.<td>WSW<td>17<td>7.7<td>7.7<td>12.3<td>9.8<td>7.0<td>4<td>0.1<td>12<td><td>1945<td>24.6<td>6.09.1949<td>-1.0<td>10.09.1972</tr>
<tr><td>Konstanz<td>447<td>1015.1<td>wolkig<td>still<td><td>14.7<td>13.8<td>20.0<td>17.2<td>14.3<td>12<td>0.7<td>11<td><td>1947<td>30.1<td>7.09.1973<td>2.9<td>10.09.1971</tr>
<tr><td>Kempten<td>705<td>1016.1<td>leicht bew.<td>SE<td>4<td>10.6<td>10.6<td>20.5<td>15.7<td>10.5<td>9<td>2.3<td>4<td><td>1952<td>28.8<td>10.09.1983<td>0.0<td>6.09.1993</tr>
<tr><td>Oberstdorf<td>812<td>-<td>leicht bew.<td>SSE<td>4<td>8.7<td>8.4<td>20.2<td>14.9<td>8.1<td>7<td>2.4<td>10<td><td>1936<td>28.5<td>1.09.1954<td>-1.1<td>6.09.1993</tr>
<tr><td>Zugspitze<td>2962<td>-<td>leicht bew.<td>WSW<td>31<td>1.4<td>0.3<td>6.3<td>3.0<td>1.2<td>X<td>0.7<td>20<td>Re<td>1900<td>17.2<td>1.09.1903<td>-10.8<td>7.09.1996</tr>
<tr><td>Hohenpeißenberg.<td>986<td>-<td>leicht bew.<td>WSW<td>8<td>11.9<td>9.5<td>20.4<td>14.6<td>11.8<td>10<td>2.5<td>13<td><td>1879<td>28.3<td>2.09.1953<td>1.1<td>2.09.1890</tr>
<tr><td>Garm.-Partenk.<td>720<td>1016.2<td>wolkig<td>SW<td>4<td>12.1<td>11.4<td>22.2<td>15.1<td>12.0<td>11<td>2.7<td>21<td><td>1936<td>29.4<td>3.09.1962<td>0.1<td>9.09.1996</tr>
<tr><td>Wendelstein<td>1835<td>-<td>wolkig<td>ESE<td>5<td>7.1<td>5.0<td>14.8<td>10.2<td>7.0<td>5<td>2.1<td>26<td><td>1951<td>21.6<td>2.09.1953<td>-3.9<td>7.09.1996</tr>
</tbody>
</table>
</div>
</div>
</body>
</html>
```
FILE: styles.css
```css
html, body {
  margin: 0;
  padding: 0;
}

body {
  width: 2000px;
  height: 2841px;
  background: #e5e6e2;
  color: #2d2d2d;
  font-family: "DejaVu Sans", "Liberation Sans", sans-serif;
  font-size: 18.5px;
}

.page {
  box-sizing: border-box;
  width: 2000px;
  height: 2841px;
  border-top: 2px solid #3c3c3c;
  border-left: 3px solid #1e1e1e;
  border-right: 2px solid #707070;
  border-bottom: 5px solid #484848;
  padding-top: 143px;
  overflow: hidden;
}

.title {
  margin: 0 0 6px;
  font-size: 25px;
  font-weight: normal;
  letter-spacing: 1.3px;
  line-height: 30px;
  text-align: center;
}

.sheet {
  margin-left: 173px;
  width: 1657px;
}

.land {
  text-align: center;
  line-height: 19px;
}

/* ---------- table ---------- */

.wx {
  table-layout: fixed;
  width: 1657px;
  border-collapse: separate;
  border-spacing: 0;
  margin-top: 3.5px;
}

.wx col:nth-child(1)  { width: 188px; }
.wx col:nth-child(2)  { width: 50px; }
.wx col:nth-child(3)  { width: 88px; }
.wx col:nth-child(4)  { width: 179px; }
.wx col:nth-child(5)  { width: 55px; }
.wx col:nth-child(6)  { width: 52px; }
.wx col:nth-child(7)  { width: 68px; }
.wx col:nth-child(8)  { width: 62px; }
.wx col:nth-child(9)  { width: 61px; }
.wx col:nth-child(10) { width: 60px; }
.wx col:nth-child(11) { width: 61px; }
.wx col:nth-child(12) { width: 60px; }
.wx col:nth-child(13) { width: 72px; }
.wx col:nth-child(14) { width: 61px; }
.wx col:nth-child(15) { width: 88px; }
.wx col:nth-child(16) { width: 64px; }
.wx col:nth-child(17) { width: 67px; }
.wx col:nth-child(18) { width: 125px; }
.wx col:nth-child(19) { width: 75px; }
.wx col:nth-child(20) { width: 121px; }

/* header */
.wx th {
  padding: 0;
  font-weight: normal;
  text-align: left;
  white-space: nowrap;
  line-height: 19px;
  vertical-align: middle;
}

.wx tr.hc th {
  line-height: 17.5px;
  padding-bottom: 4.5px;
  border-bottom: 3px solid #333;
}

.wx th.R { text-align: right; }

.pl10 { padding-left: 10px !important; }
.pl14 { padding-left: 14px !important; }
.pl16 { padding-left: 16px !important; }
.pl17 { padding-left: 17px !important; }
.pl19 { padding-left: 19px !important; }
.pl20 { padding-left: 20px !important; }
.pl23 { padding-left: 23px !important; }
.pl24 { padding-left: 24px !important; }
.pl25 { padding-left: 25px !important; }
.pl29 { padding-left: 29px !important; }
.pl43 { padding-left: 43px !important; }
.pl58 { padding-left: 58px !important; }
.pl80 { padding-left: 80px !important; }
.pr0 { padding-right: 0 !important; }
.pr1 { padding-right: 1px !important; }
.pr2 { padding-right: 2px !important; }
.pr3 { padding-right: 3px !important; }
.pr5 { padding-right: 5px !important; }

/* body rows */
.wx td {
  padding: 0;
  line-height: 19.85px;
  white-space: nowrap;
  text-align: right;
  letter-spacing: 2px;
  vertical-align: top;
}

.wx td:nth-child(1),
.wx td:nth-child(4),
.wx td:nth-child(5),
.wx td:nth-child(15) {
  text-align: left;
  letter-spacing: 0;
}

.wx td:nth-child(4)  { padding-left: 23px; }
.wx td:nth-child(15) { padding-left: 33px; }

.wx tbody tr:first-child td { padding-top: 2.3px; }
.wx thead + tbody tr:first-child td { padding-top: 3.5px; }
.wx tbody tr:last-child td { border-bottom: 3px solid #333; }
.wx tr.gap td { padding-top: 8.1px; }

.wx.alpine {
  margin-top: 4.8px;
  margin-left: 8px;
}
.wx.alpine tbody tr:first-child td { padding-top: 2.3px; }
```
